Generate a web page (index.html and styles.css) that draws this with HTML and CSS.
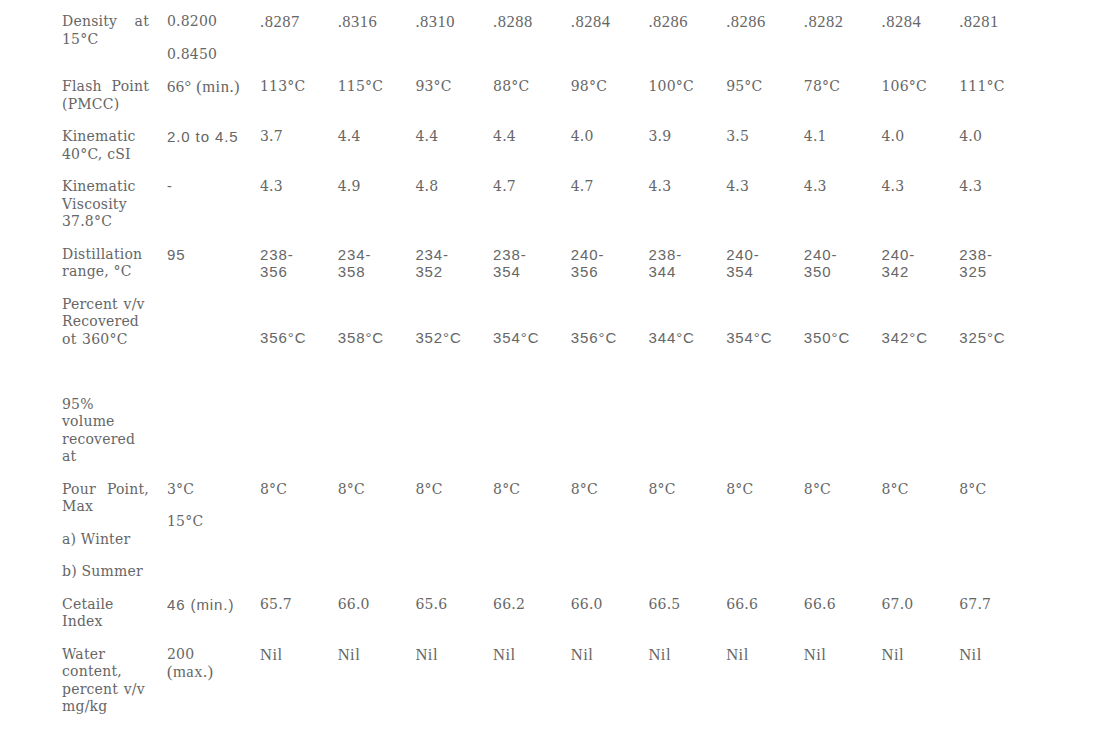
FILE: index.html
```html
<!DOCTYPE html>
<html lang="en">
<head>
<meta charset="utf-8">
<title>Diesel specification</title>
<link rel="stylesheet" href="styles.css">
</head>
<body>
<div class="spec">
  <div class="row">
    <div class="cell label"><p>Density at 15°C</p></div>
    <div class="cell bk"><p>0.8200</p><p>0.8450</p></div>
    <div class="cell tm"><p>.8287</p></div>
    <div class="cell tm"><p>.8316</p></div>
    <div class="cell tm"><p>.8310</p></div>
    <div class="cell tm"><p>.8288</p></div>
    <div class="cell tm"><p>.8284</p></div>
    <div class="cell tm"><p>.8286</p></div>
    <div class="cell tm"><p>.8286</p></div>
    <div class="cell tm"><p>.8282</p></div>
    <div class="cell tm"><p>.8284</p></div>
    <div class="cell tm"><p>.8281</p></div>
  </div>
  <div class="row">
    <div class="cell label"><p>Flash Point (PMCC)</p></div>
    <div class="cell tm"><p>66° (min.)</p></div>
    <div class="cell bk"><p>113°C</p></div>
    <div class="cell bk"><p>115°C</p></div>
    <div class="cell bk"><p>93°C</p></div>
    <div class="cell bk"><p>88°C</p></div>
    <div class="cell bk"><p>98°C</p></div>
    <div class="cell bk"><p>100°C</p></div>
    <div class="cell bk"><p>95°C</p></div>
    <div class="cell bk"><p>78°C</p></div>
    <div class="cell bk"><p>106°C</p></div>
    <div class="cell bk"><p>111°C</p></div>
  </div>
  <div class="row">
    <div class="cell label"><p>Kinematic 40°C, cSI</p></div>
    <div class="cell sn"><p>2.0 to 4.5</p></div>
    <div class="cell bk"><p>3.7</p></div>
    <div class="cell bk"><p>4.4</p></div>
    <div class="cell bk"><p>4.4</p></div>
    <div class="cell bk"><p>4.4</p></div>
    <div class="cell bk"><p>4.0</p></div>
    <div class="cell bk"><p>3.9</p></div>
    <div class="cell bk"><p>3.5</p></div>
    <div class="cell bk"><p>4.1</p></div>
    <div class="cell bk"><p>4.0</p></div>
    <div class="cell bk"><p>4.0</p></div>
  </div>
  <div class="row">
    <div class="cell label"><p>Kinematic Viscosity 37.8°C</p></div>
    <div class="cell bk"><p>-</p></div>
    <div class="cell bk"><p>4.3</p></div>
    <div class="cell bk"><p>4.9</p></div>
    <div class="cell bk"><p>4.8</p></div>
    <div class="cell bk"><p>4.7</p></div>
    <div class="cell bk"><p>4.7</p></div>
    <div class="cell bk"><p>4.3</p></div>
    <div class="cell bk"><p>4.3</p></div>
    <div class="cell bk"><p>4.3</p></div>
    <div class="cell bk"><p>4.3</p></div>
    <div class="cell bk"><p>4.3</p></div>
  </div>
  <div class="row">
    <div class="cell label"><p>Distillation range, °C</p></div>
    <div class="cell sn"><p>95</p></div>
    <div class="cell sn"><p>238-<br>356</p></div>
    <div class="cell sn"><p>234-<br>358</p></div>
    <div class="cell sn"><p>234-<br>352</p></div>
    <div class="cell sn"><p>238-<br>354</p></div>
    <div class="cell sn"><p>240-<br>356</p></div>
    <div class="cell sn"><p>238-<br>344</p></div>
    <div class="cell sn"><p>240-<br>354</p></div>
    <div class="cell sn"><p>240-<br>350</p></div>
    <div class="cell sn"><p>240-<br>342</p></div>
    <div class="cell sn"><p>238-<br>325</p></div>
  </div>
  <div class="row row-spaced">
    <div class="cell label plain"><p>Percent v/v Recovered ot 360°C</p></div>
    <div class="cell"></div>
    <div class="cell sn bottom"><p>356°C</p></div>
    <div class="cell sn bottom"><p>358°C</p></div>
    <div class="cell sn bottom"><p>352°C</p></div>
    <div class="cell sn bottom"><p>354°C</p></div>
    <div class="cell sn bottom"><p>356°C</p></div>
    <div class="cell sn bottom"><p>344°C</p></div>
    <div class="cell sn bottom"><p>354°C</p></div>
    <div class="cell sn bottom"><p>350°C</p></div>
    <div class="cell sn bottom"><p>342°C</p></div>
    <div class="cell sn bottom"><p>325°C</p></div>
  </div>
  <div class="row">
    <div class="cell label narrow"><p>95% volume recovered at</p></div>
  </div>
  <div class="row">
    <div class="cell label"><p>Pour Point, Max</p><p>a) Winter</p><p>b) Summer</p></div>
    <div class="cell bk"><p>3°C</p><p>15°C</p></div>
    <div class="cell bk"><p>8°C</p></div>
    <div class="cell bk"><p>8°C</p></div>
    <div class="cell bk"><p>8°C</p></div>
    <div class="cell bk"><p>8°C</p></div>
    <div class="cell bk"><p>8°C</p></div>
    <div class="cell bk"><p>8°C</p></div>
    <div class="cell bk"><p>8°C</p></div>
    <div class="cell bk"><p>8°C</p></div>
    <div class="cell bk"><p>8°C</p></div>
    <div class="cell bk"><p>8°C</p></div>
  </div>
  <div class="row">
    <div class="cell label"><p>Cetaile Index</p></div>
    <div class="cell sn"><p>46 (min.)</p></div>
    <div class="cell bk"><p>65.7</p></div>
    <div class="cell bk"><p>66.0</p></div>
    <div class="cell bk"><p>65.6</p></div>
    <div class="cell bk"><p>66.2</p></div>
    <div class="cell bk"><p>66.0</p></div>
    <div class="cell bk"><p>66.5</p></div>
    <div class="cell bk"><p>66.6</p></div>
    <div class="cell bk"><p>66.6</p></div>
    <div class="cell bk"><p>67.0</p></div>
    <div class="cell bk"><p>67.7</p></div>
  </div>
  <div class="row">
    <div class="cell label plain"><p>Water content, percent v/v mg/kg</p></div>
    <div class="cell"><p><span class="bk">200</span><br><span class="tm">(max.)</span></p></div>
    <div class="cell tm"><p>Nil</p></div>
    <div class="cell tm"><p>Nil</p></div>
    <div class="cell tm"><p>Nil</p></div>
    <div class="cell tm"><p>Nil</p></div>
    <div class="cell tm"><p>Nil</p></div>
    <div class="cell tm"><p>Nil</p></div>
    <div class="cell tm"><p>Nil</p></div>
    <div class="cell tm"><p>Nil</p></div>
    <div class="cell tm"><p>Nil</p></div>
    <div class="cell tm"><p>Nil</p></div>
  </div>
</div>
</body>
</html>
```
FILE: styles.css
```css
html, body {
  margin: 0;
  padding: 0;
  background: #ffffff;
}

body {
  color: #666666;
  font-family: "DejaVu Serif", serif;
  font-size: 14px;
  line-height: 17.5px;
}

.spec {
  padding: 13px 0 0 62px;
  display: flex;
  flex-direction: column;
  gap: 15px;
}

.row {
  display: grid;
  grid-template-columns: 105px 93px repeat(10, 77.7px);
}

.row-spaced {
  margin-bottom: 32.5px;
}

.cell {
  display: flex;
  flex-direction: column;
  gap: 15px;
}

.cell p {
  margin: 0;
}

.bottom {
  justify-content: flex-end;
  padding-bottom: 2px;
}

.label {
  width: 87px;
  text-align: justify;
  font-family: "DejaVu Serif", serif;
  font-size: 14px;
  letter-spacing: 0.2px;
}

.label.plain {
  text-align: left;
  word-spacing: 1px;
}

.label.narrow {
  width: 70px;
}

.bk {
  font-family: "DejaVu Serif", serif;
  font-size: 14px;
  letter-spacing: 0.2px;
}

.tm {
  font-family: "Liberation Serif", "Times New Roman", serif;
  font-size: 16.5px;
  letter-spacing: 0.5px;
}

.sn {
  font-family: "Liberation Sans", Arial, sans-serif;
  font-size: 15px;
  letter-spacing: 0.9px;
}
```
